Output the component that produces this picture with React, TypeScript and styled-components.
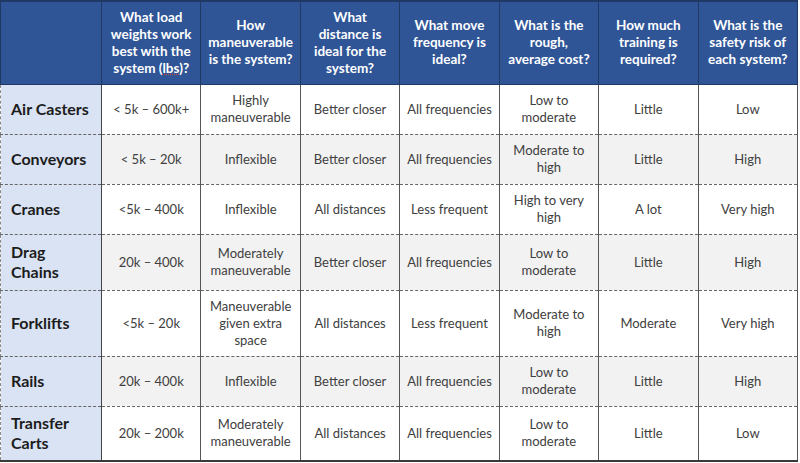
import React from 'react'
import styled, { createGlobalStyle } from 'styled-components'

const GlobalStyle = createGlobalStyle`
  html, body {
    margin: 0;
    padding: 0;
    background: #ffffff;
  }
  body {
    font-family: Lato, "Open Sans", "Liberation Sans", sans-serif;
  }
`

const Table = styled.table`
  width: 798px;
  border-collapse: collapse;
  table-layout: fixed;
  border-bottom: 2px solid #3a3a3a;
`

const HeadRow = styled.tr`
  height: 83px;
  background-color: #2f5597;
`

const HeadCell = styled.th`
  color: #ffffff;
  font-size: 13.5px;
  font-weight: 700;
  line-height: 17px;
  text-align: center;
  vertical-align: middle;
  padding: 0 6px;
  border-top: 2px solid #1f3864;
  border-left: 1px solid #1f3864;
  border-right: 1px solid #1f3864;
  border-bottom: 1px solid #1f3864;
`

const Row = styled.tr<{ $h: number; $shade: boolean }>`
  height: ${p => p.$h}px;
  background-color: ${p => (p.$shade ? '#f2f2f2' : '#ffffff')};
`

const NameCell = styled.td`
  background-color: #dae3f3;
  color: #1c1c1c;
  font-size: 16px;
  font-weight: 700;
  line-height: 20px;
  text-align: left;
  vertical-align: middle;
  padding: 0 8px 0 10px;
  border-left: 1px dashed #8a8a8a;
  border-right: 1px solid #444444;
  border-top: 1px dashed #666666;
  border-bottom: 1px dashed #666666;
`

const Cell = styled.td`
  color: #404040;
  font-size: 13px;
  line-height: 17px;
  text-align: center;
  vertical-align: middle;
  padding: 0 6px;
  border-left: 1px solid #444444;
  border-right: 1px solid #555555;
  border-top: 1px dashed #666666;
  border-bottom: 1px dashed #666666;
`

const Lbs = styled.span`
  text-decoration: underline dotted #c0504d;
  text-underline-offset: 1px;
`

const headers = [
  '',
  'What load weights work best with the system (lbs)?',
  'How maneuverable is the system?',
  'What distance is ideal for the system?',
  'What move frequency is ideal?',
  'What is the rough, average cost?',
  'How much training is required?',
  'What is the safety risk of each system?',
]

type Item = { name: string; h: number; cells: string[] }

const rows: Item[] = [
  { name: 'Air Casters', h: 50, cells: ['< 5k – 600k+', 'Highly maneuverable', 'Better closer', 'All frequencies', 'Low to moderate', 'Little', 'Low'] },
  { name: 'Conveyors', h: 50, cells: ['< 5k – 20k', 'Inflexible', 'Better closer', 'All frequencies', 'Moderate to high', 'Little', 'High'] },
  { name: 'Cranes', h: 50, cells: ['<5k – 400k', 'Inflexible', 'All distances', 'Less frequent', 'High to very high', 'A lot', 'Very high'] },
  { name: 'Drag Chains', h: 56, cells: ['20k – 400k', 'Moderately maneuverable', 'Better closer', 'All frequencies', 'Low to moderate', 'Little', 'High'] },
  { name: 'Forklifts', h: 66, cells: ['<5k – 20k', 'Maneuverable given extra space', 'All distances', 'Less frequent', 'Moderate to high', 'Moderate', 'Very high'] },
  { name: 'Rails', h: 50, cells: ['20k – 400k', 'Inflexible', 'Better closer', 'All frequencies', 'Low to moderate', 'Little', 'High'] },
  { name: 'Transfer Carts', h: 55, cells: ['20k – 200k', 'Moderately maneuverable', 'All distances', 'All frequencies', 'Low to moderate', 'Little', 'Low'] },
]

const App = () => {
  return (
    <>
      <GlobalStyle />
      <Table>
        <colgroup>
          <col style={{ width: 101 }} />
          {headers.slice(1).map((_, i) => <col key={i} />)}
        </colgroup>
        <thead>
          <HeadRow>
            {headers.map((h, i) => (
              <HeadCell key={i}>
                {i === 1 ? (<>What load weights work best with the system (<Lbs>lbs</Lbs>)?</>) : h}
              </HeadCell>
            ))}
          </HeadRow>
        </thead>
        <tbody>
          {rows.map((r, i) => (
            <Row key={r.name} $h={r.h} $shade={i % 2 === 1}>
              <NameCell>{r.name}</NameCell>
              {r.cells.map((c, j) => <Cell key={j}>{c}</Cell>)}
            </Row>
          ))}
        </tbody>
      </Table>
    </>
  )
}

export default App
